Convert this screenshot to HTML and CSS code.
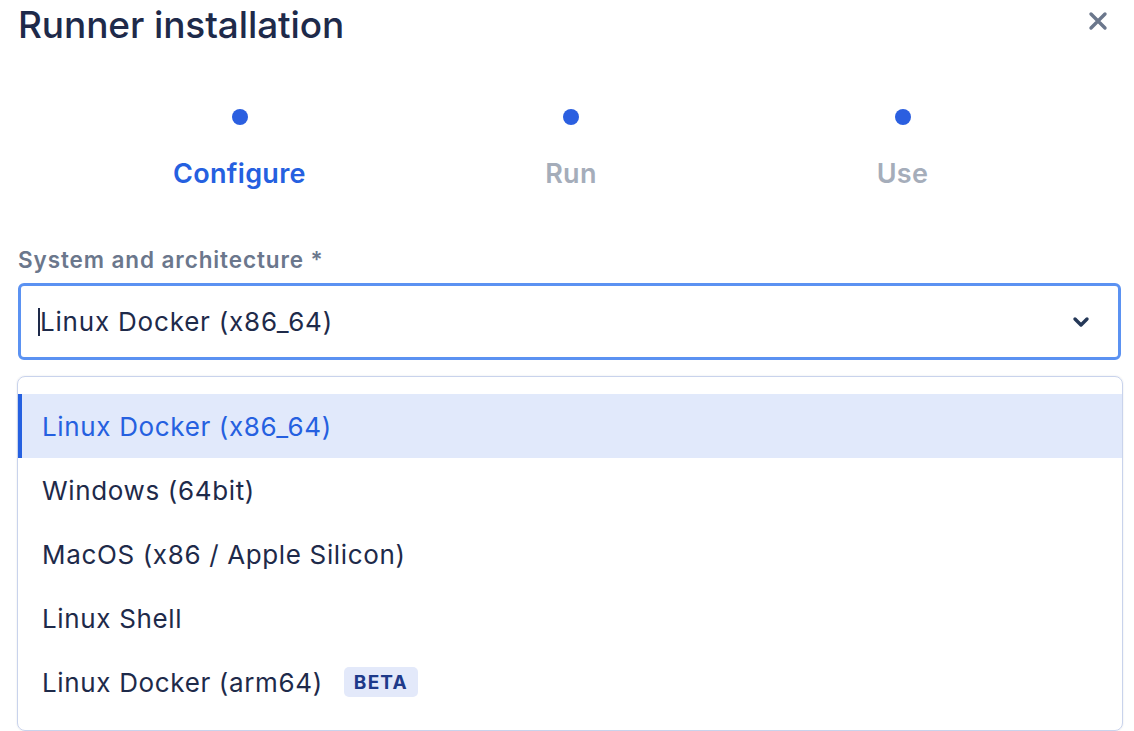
FILE: index.html
```html
<!DOCTYPE html>
<html lang="en">
<head>
<meta charset="utf-8">
<title>Runner installation</title>
<link rel="stylesheet" href="styles.css">
</head>
<body>
<div class="modal">
  <header class="modal-header">
    <h1 class="title">Runner installation</h1>
    <button class="close" aria-label="Close">
      <svg width="20" height="20" viewBox="0 0 20 20"><path d="M3 3 L17 17 M17 3 L3 17" stroke="#6B778C" stroke-width="3.4" stroke-linecap="round"/></svg>
    </button>
  </header>
  <ol class="steps">
    <li class="step active"><span class="dot"></span><span class="step-label">Configure</span></li>
    <li class="step"><span class="dot"></span><span class="step-label">Run</span></li>
    <li class="step"><span class="dot"></span><span class="step-label">Use</span></li>
  </ol>
  <div class="field">
    <label class="field-label">System and architecture *</label>
    <div class="select">
      <span class="caret"></span><span class="select-value">Linux Docker (x86_64)</span>
      <svg class="chevron" width="18" height="12" viewBox="0 0 18 12"><path d="M3 3 L9 9 L15 3" fill="none" stroke="#253858" stroke-width="3.4" stroke-linecap="round" stroke-linejoin="round"/></svg>
    </div>
    <ul class="menu">
      <li class="option selected">Linux Docker (x86_64)</li>
      <li class="option">Windows (64bit)</li>
      <li class="option">MacOS (x86 / Apple Silicon)</li>
      <li class="option">Linux Shell</li>
      <li class="option">Linux Docker (arm64) <span class="badge">BETA</span></li>
    </ul>
  </div>
</div>
</body>
</html>
```

FILE: styles.css
```css
* { box-sizing: border-box; }
html, body { margin: 0; padding: 0; background: #fff; }
body {
  font-family: Inter, "Noto Sans", "Liberation Sans", sans-serif;
  color: #172B4D;
  width: 1134px;
  height: 731px;
  overflow: hidden;
}
.modal { padding: 0 13px 0 18px; }
.modal-header {
  display: flex;
  justify-content: space-between;
  align-items: flex-start;
  height: 60px;
}
.title {
  margin: 0;
  padding-top: 2px;
  font-size: 37px;
  line-height: 46px;
  font-weight: 500;
  color: #1E2A4A;
  letter-spacing: -0.1px;
}
.close {
  border: 0;
  background: none;
  padding: 0;
  margin: 11px 13px 0 0;
  width: 20px;
  height: 20px;
  display: flex;
  justify-content: center;
}
.steps {
  list-style: none;
  margin: 0 61px 0 64px;
  padding: 49px 0 0;
  display: grid;
  grid-template-columns: repeat(3, 331.5px);
  justify-content: center;
}
.step {
  display: flex;
  flex-direction: column;
  align-items: center;
}
.dot {
  width: 16px;
  height: 16px;
  border-radius: 50%;
  background: #2B5FE0;
}
.step-label {
  margin-top: 33px;
  font-size: 27px;
  line-height: 32px;
  font-weight: 600;
  letter-spacing: 0.3px;
  color: #A5ADBA;
}
.step.active .step-label { color: #2560E0; }
.field { margin-top: 57px; }
.field-label {
  display: block;
  font-size: 22.5px;
  line-height: 26px;
  font-weight: 600;
  letter-spacing: 0.9px;
  color: #6B778C;
}
.select {
  margin-top: 10px;
  height: 77px;
  border: 3px solid #5B92F2;
  border-radius: 6px;
  display: flex;
  align-items: center;
  padding: 0 28px 0 17px;
  font-size: 26px;
  letter-spacing: 0.8px;
  color: #1E2A4A;
}
.caret {
  width: 2px;
  height: 28px;
  background: #1E2A4A;
}
.select-value { flex: 1; }
.chevron { display: block; }
.menu {
  list-style: none;
  margin: 16px -2px 0 -1px;
  padding: 17px 0 16px;
  border: 1px solid #C9D3EC;
  border-radius: 8px;
  box-shadow: 0 0 2px rgba(9,30,66,0.12);
}
.option {
  height: 64px;
  display: flex;
  align-items: center;
  padding-left: 20px;
  font-size: 26px;
  letter-spacing: 0.65px;
  color: #1E2A4A;
  border-left: 4px solid transparent;
}
.option.selected {
  background: #E1E9FB;
  border-left-color: #2560E0;
  color: #2560E0;
}
.badge {
  margin-left: 21px;
  display: inline-flex;
  align-items: center;
  height: 30px;
  padding: 0 10px;
  border-radius: 5px;
  background: #E3E9FA;
  color: #1E3A8A;
  font-size: 19px;
  font-weight: 700;
  letter-spacing: 1.2px;
}
```
